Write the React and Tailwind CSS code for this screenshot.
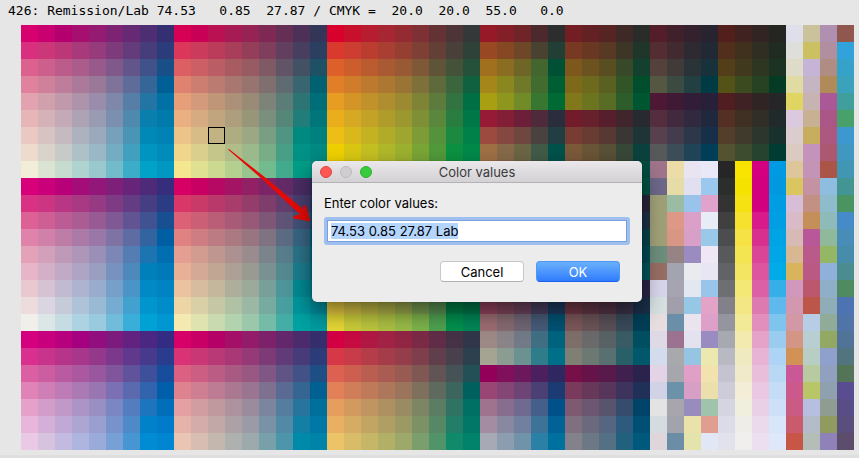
import { useEffect, useRef, useState } from 'react';

// Each block is a list of 25 rows; the blocks stand side by side on the chart.
const CYAN_MAGENTA = [
  'd6006f c80070 b4006e a60e70 941a72 7e2274 662a74 4e2e72 342f70',
  'd8307e cb3779 bb3777 a8397a 963b7b 7e3b7c 643c7c 463d7a 2c3c7a',
  'dd618f cc5f8c bb5c8a aa5c8a 985a8b 805889 625589 41528a 184f87',
  'e0829d cf809b be7d9a ab7a9a 997898 80739a 5f6b99 366698 005f97',
  'e3a2b0 d1a0ad c099aa ad94aa 998dab 8088aa 567ea6 2375a4 0070a5',
  'e6b5b8 d4b2b7 c3aab6 aea3b4 999bb2 7b8faf 4f89ad 097fae 0079ab',
  'e9c9c2 d7c3c1 c5babf adb3be 9aa9bb 77a0ba 4a94b6 0089b6 0083b4',
  'eddbcd dad3cc c6cbc8 adc1c6 99b7c4 74acc1 42a0bf 0095c0 008cba',
  'f2edd8 dbe4d3 c5dccf afd3cf 99c8cd 72bbca 3cadc8 00a2c8 0098c2',
  'd7007a c90079 b80078 a40c78 921779 7e1f79 662579 4e2a79 362d7c',
  'd93285 cb3582 b83785 a93982 963a83 7e3b84 643c84 463d83 2b3c84',
  'dd6195 cd5f94 bb5c94 aa5c93 985a93 805893 625493 415293 184f90',
  'e083ab d080a9 be7da7 ab7aa6 9977a6 7e73a3 5e6ca3 3364a0 005ea3',
  'e4a2b9 d2a0ba bf9ab8 ad96b8 9a8fb6 7c87b5 547eb3 1c75b0 006eb0',
  'e6b5c8 d4b0c6 c1aac5 aea5c4 9a9ec1 7892c0 4e89bb 0080ba 0079b8',
  'e9c8d0 d5c2d2 c2bad0 aeb3cf 9aaccd 76a0c9 4a94c7 0089c4 0083c3',
  'ecdcdc dad5e0 c6cbda aec2d8 9ab9d4 76acd1 42a1ce 0096cd 008cc8',
  'f0efe9 dbe7e6 c5dce2 add2e2 99cadd 72bcdb 38aed8 00a2d6 0096d1',
  'd5007e c8007d b6007e a4007f 920d7e 7c1a7e 62227f 4a2782 342c82',
  'd92f8e c8348c b6358b a8378b 94388b 7c388b 61398c 473a8d 2a3c8d',
  'db5fa3 cc5da1 ba5aa0 aa589f 98579e 80559c 60529b 3f509b 184d9b',
  'e083b6 d07fb6 bd7cb6 ab79b4 9975b2 7b70b3 5b69ae 3164ac 005eab',
  'e5a1ca d39dc9 c099c8 ad94c6 998fc3 7a87c2 537dbe 1c75bd 006eb8',
  'e8b6da d4b0d8 c0a9d5 ada5d2 9a9fd0 7893cc 4e8ac8 0081c8 007bc9',
  'eac9e4 d7c3e0 c3bbdf aeb5df 9aabda 76a0d6 4895d3 008bd2 0085d0',
];

const HALF_YELLOW = [
  'd60055 c80056 ba1153 a71b54 952454 7e2854 642e55 4c3057 343657',
  'da375a cb3b5b ba3c5a a93e5a 953e5a 7e3e5c 623f5e 483f60 2b4060',
  'dc6063 cb5f65 ba5d64 a95b62 985a63 7f5964 615466 425164 1e5066',
  'df826f cc7f70 bb7b70 aa7770 987470 7f706f 5f6a71 396570 006270',
  'e69f79 d39a7b c09679 ac9178 9a8b76 7e8379 5b7c77 2d7475 006e78',
  'ebb082 d6ab82 c1a57f ae9e7e 989679 7b8f7e 568677 217d7a 00767b',
  'ecc48a d8bc87 c2b382 aead82 9ca884 7a9e83 509482 00897e 00807f',
  'f0d68c dbcf8e c5c68a b1bd89 9cb98c 78ad88 489f86 009285 008982',
  'f5e78f e0e093 cbd991 b5cf90 9ac48f 72bb8f 43ab8d 009e88 009486',
  'd70064 c80063 b50964 a41465 922065 7b2567 622b67 4a2d65 333268',
  'd93768 c93a69 b8396a a83c6a 953d6a 7e3d6b 623d6e 483e70 2c3e70',
  'dc6076 cb5f76 ba5d76 a95a76 985976 7f5776 605476 435178 1e5078',
  'df8281 ce7e82 bc7b82 aa7982 987581 7f7281 5d6b82 386583 006283',
  'e49f92 d29c91 c09790 ac9190 9a8c8e 7b848b 577c8a 2a7388 006e88',
  'e8b097 d4aa97 c1a694 aea094 999a92 7a9192 53888f 1b7d8e 00768e',
  'ecc3a1 d8bc9f c4b79c aeae9c 9baa9b 789f99 4d9598 008a93 008293',
  'eed5a6 dad0a8 c6c8a5 b1c1a4 9bb8a4 78ab9f 47a09f 00959d 008d9c',
  'f4e9b1 dfe3b0 c9dab0 b3d3af 9bc8ab 74bba8 44ada5 00a2a2 009a9f',
  'd60068 c80066 b50068 a41068 921c69 7c226a 63286b 4c2b6d 362f6d',
  'd93376 c93775 b93876 a83976 953a76 7c3b77 613b78 473b79 2b3c79',
  'dc6082 cc5e83 ba5c83 a95a82 985882 805784 605485 425186 1d4f84',
  'df828f ce8092 bd7c93 ab7892 997592 7e7190 5b6a92 356591 006091',
  'e4a0a2 d19da0 c0999e ae929d 9a8c9c 7b869e 557d9e 27759c 006f9c',
  'e6b3aa d4aca9 c2a8a6 aea1a6 9a9ba6 7a92a5 5289a5 147fa4 0078a5',
  'eac5b3 d8bdb3 c4b8ae afb1ae 9caaac 78a0ab 4d95aa 008aaa 0083a9',
];

const FULL_YELLOW = [
  'd8002c c8102d b81c31 a72633 942b33 7e3034 643234 4c3437 343839',
  'd93a2d cb3e31 ba3d30 a93f32 953f33 7e4034 633f36 4a403a 2e4239',
  'dd5f29 cc5d2d bb5b30 aa5a32 985a35 7f5837 605438 45523a 255039',
  'e07f27 cf7d2b bd792d ac7831 9a7434 7f6f39 5f6a3c 3b653d 0f6140',
  'e69d22 d39626 c09229 ae8e2e 9b8a32 7f8336 5c7b3c 337341 006f44',
  'eaae1d d5a924 c3a226 af9c2b 9b9830 7e8f36 5a873c 2a7d41 007747',
  'edbf16 d8b81d c4b222 b0ac2a 9ea62f 7d9c37 55923c 1c8941 00814a',
  'efd100 d9c812 c5c021 b0b82a 9cb22f 7aa636 519a3b 0c9142 00894a',
  'f2e200 dcd810 c8cf20 b2c62a 9cbc30 78b038 4aa43e 009a44 009048',
  'd60036 c80d37 b7173a a6203c 93263c 7d2b3d 622f3e 493340 33373f',
  'd8393a ca3d3c b83d3d a73e3e 943f3f 7e3f40 623f41 494043 2d4143',
  'dd603c cc5e3f bb5c41 aa5b42 985a44 7f5846 615447 455248 245047',
  'e18040 d07e42 be7a43 ad7846 9b7448 7f704b 5f6a4d 3c654d 08604f',
  'e69e40 d39843 c19445 ae9048 9b8b4a 7e844c 5b7c4f 317452 006f54',
  'eaaf40 d6aa44 c3a444 b09e47 9b994a 7d914d 598850 267e53 007757',
  'edc13e d8ba42 c5b445 b1ae48 9ea84c 7c9e51 549352 168a56 00825a',
  'f0d040 d8c545 c5bc45 b4b449 9dab4d 7ba053 5b9556 008248 00794c',
  'e6d836 cacc3a bcc63d adc042 99bc47 7db34b 4ea250 00904e 008657',
  'd30043 c60a42 b01844 a22245 902544 7b2a46 602c48 463247 32364a',
  'd63848 c83b48 b53c49 a43c49 933e4a 7e3e4b 613e4b 48404c 2c404d',
  'dc6150 cc5f50 bb5e52 aa5c53 985b54 7f5854 625455 455256 225056',
  'e28158 d07e5a be7a59 ad775b 9b745c 7f705d 5f6a5f 3c655d 00605e',
  'e69e5e d39a60 c19561 ae9161 9a8c62 7d8562 5a7d63 2f7463 006f64',
  'e9b063 d6ab64 c2a562 b09f63 9b9964 7c9265 578865 227e66 007767',
  'ecc366 d8bc67 c5b668 b2b067 9da96a 7b9f6c 529469 108a6b 00826b',
];

const BLACK_40 = [
  '961928 831f26 6f2528 4c292c 2c2e2e',
  '984822 854823 6e4728 4a4230 213f34',
  'a0701f 8a6c22 6f6527 43652e 005035',
  'a4861b 8a8721 70792a 426b30 005e35',
  'a89f12 8e961e 718b28 387731 006a35',
  '961935 821f37 6b1f39 4e2a3b 2a2e3c',
  '9c4a40 854840 6f473f 4a4241 213f42',
  'a07045 876a49 6c6645 425b48 00524b',
  'a68b4e 8b8450 6f7a50 3f6b50 006053',
  'a9a452 8e9b54 6f8f54 367a54 006d54',
  '950d44 811745 6d1d47 4d2549 2d2b4a',
  '994852 844750 6f4650 4b4251 1e3f52',
  '9e6f5c 876b5e 6f665d 455b60 005260',
  'a48a6a 8b846c 707a6c 406d6c 00616c',
  'a8a473 8c9c74 6e9074 347b72 006e72',
  '94064e 800f4f 6c194f 4c2153 2e2954',
  '984660 84465e 704560 4b4161 1b3e62',
  '9c6d73 876a72 706674 465b78 005373',
  '9c8985 8a8488 717a86 406f84 00637e',
  'a5a493 8b9d92 6b9190 2f7c8b 007089',
  '93005a 80105b 6c185c 4c1f5e 2f2760',
  '9a4674 844675 6e4474 4b4073 1c3b72',
  '9f738e 876d8e 706990 455f8c 005189',
  'a48da3 8888a0 70809e 3d7399 006296',
  'a7aab5 8d9db0 7093aa 2b80a5 00709f',
];

const BLACK_60 = [
  '721e22 642124 572424 3f2927 2a2c2a',
  '773922 683822 583a24 3d3526 20362a',
  '7d581d 6b521f 594e22 374928 144030',
  '7e691a 6d6a1e 596021 325527 004e2c',
  '80781a 6c7420 596c26 2d5d2a 005630',
  '721b2b 66212c 571f2e 40252c 282a32',
  '773c32 683b33 573832 3a3634 1f3437',
  '7b5a39 6b5538 585137 384838 0c423d',
  '7e6c40 6b6740 586040 325540 004e41',
  '807b44 6c7544 586d44 2b5f44 005544',
  '741538 641a39 571f3a 40243c 29263c',
  '783a44 683844 573744 3c3546 1d3246',
  '7d594c 6b564c 58514c 38484e 06444e',
  '7f6d58 6b6858 586158 325758 004b55',
  '807d60 6c7760 576e60 296060 00575d',
  '751340 65163f 571c42 402244 2a2546',
  '743a48 653848 553648 3c344a 1a2f4a',
  '7c5759 6b5458 595058 3a4a5a 003f55',
  '7e6e6a 6b6a6b 586265 385b64 004f61',
  '7f7f74 6c7972 587070 296068 00586a',
  '771048 66134a 581a4a 40204e 2c224e',
  '7a3a5b 68385b 58355b 3e335c 203058',
  '7e5a70 6b5870 59546e 374c6c 00446a',
  '80707f 6a6a7c 566580 2d5a7d 005075',
  '83828a 6c7984 556f84 22617e 00587d',
];

const BLACK_80 = [
  '531e2a 40202b 33212e 27232f 521f1d 402220 312422 252622',
  '542d32 422b30 2e2a32 212a34 522f1c 40301e 302e22 202b22',
  '55413b 403b38 2a3438 17323a 523f19 40391e 2e3622 1c3222',
  '565743 3b4b41 224041 003b44 535217 3b4a1f 264222 053b25',
  '4d1834 3e1a34 321d38 272038 501e21 3f2223 302425 262528',
  '542d3f 422a3e 31293d 20283e 532f24 403024 302e26 212a2a',
  '56414c 423c4c 2c3749 182f49 523e2a 3f3a2c 2c362d 19312d',
  '575859 3d4d58 204456 003e57 535231 3d4b2f 26432f 003c32',
  'a0758c ecdca8 e8e4f1 e8e8f8 262626 f8e400 d50080 009ae3',
  '6d6888 e5dca8 e2e0f0 9bc8ed 2c2e2c f6e200 d2007e 0099e0',
  'a0a078 9bbca4 99c3ea e0a3cb 333333 f6e213 d2007e 009de2',
  'a0a078 de9888 dc9fc8 e8ecf6 404041 f6e12e d81a8a 009fe4',
  'a0a078 d79784 d9a0c7 99c8e8 4c4d4f f6e245 d8308f 00a3e4',
  '6e8e7c 968484 9a8cc0 efe8f4 58595b f3e452 db4597 00a6e6',
  '986e64 a2a5af eaebef e8e6f3 626366 f3e562 dc559e 00abe8',
  'd8d6ec a6a4b0 e3e8f0 9ac5ea 6e6f72 f3e775 dc60a6 35afe8',
  'd6e0e0 a09fab 96c8e6 e3a3c7 828189 f3e684 dd7ab0 60b9ec',
  'e8dee0 6b8ea9 e9e4ee dda0c9 94959e f3ea98 e28fbd 7fc4ed',
  'ded9e4 9b7290 e4e2ee 998cc0 a6a9b0 f3eab0 e5a3ca 9accf0',
  'd3dced a8a9ac 96c4e3 ebe9b0 b9b9c4 f0eac0 e8b4d6 add4f4',
  'e2d4e6 a5a7ad e09fc6 f2e2ad c4c3cf f0eaca e9bedb b8d8f4',
  'd2d2e6 6c92aa d79fc5 ebe0ac cdccd8 f3ecd6 eac7e2 c4dcf6',
  'e3e3e3 a8a6ac 988cbd 9fc4ab d5d4e1 f0eedd ead0e6 cde0f8',
  'd4dcdf a3a3ad e9e3ab e09e90 dcdce8 eeede8 eadaec d8e6fa',
  'e1d5dc 6b8ea6 e5e3ac e1e7f5 e2e2ed f0efee ecdfef dfe8fa',
];

const LIGHT_TINTS = [
  'dedfeb c9c29a b090b0 90574f',
  'dedfdb cbc062 b0909f 32a2da',
  'dedcc8 c5b4d5 b08d83 36a1c9',
  'dfdba3 c5b4c2 b08a59 3aa2ba',
  'e0d562 c8b3b3 ab5897 409f9d',
  'dac9df c8b093 aa5788 48a06a',
  'dbccd0 c6ae5e ac5880 3d98cf',
  'dbcabf c393bb ac5870 4097bf',
  'dcc69a c394b6 aa5548 4197b3',
  'dac560 c492a3 8fbde0 439594',
  'd7bdd5 c39184 8fbccd 4a9462',
  'd9bac7 c48f58 8fbaba 458bc8',
  'd7bab3 b95898 8fb99a 478db8',
  'd8b793 ba5a8b 93b765 488cab',
  'd9b45e ba5984 8fb0d8 4a8c90',
  'd098bd bb586d 8fafc9 4f8a60',
  'd298b0 bb5648 8fadb7 4d73b2',
  'd298a3 b7cde6 90ac98 5074a8',
  'd39684 b8ced2 93a862 527398',
  'd29256 b8cdc4 8fa0cd 51747f',
  'cb5896 b8caa0 90a0be 537457',
  'cb598c b8c667 8fa0ae 594c90',
  'ca5b82 b6bfdf 8f9c90 594d85',
  'c95b6d b5bcc9 909c5f 5a4e7d',
  'c85646 b4bdb8 8f82b8 5c4d6c',
];

const BLOCKS = [CYAN_MAGENTA, HALF_YELLOW, FULL_YELLOW, BLACK_40, BLACK_60, BLACK_80, LIGHT_TINTS];
const ROWS = CYAN_MAGENTA.map((_, r) => BLOCKS.flatMap((block) => block[r].split(' ')));
const SELECTED = { row: 6, col: 11 };

function Chart() {
  return (
    <div className="grid grid-cols-49 auto-rows-[17px] pl-[21px] pr-[5px]">
      {ROWS.map((row, r) =>
        row.map((hex, c) => (
          <div
            key={`${r}-${c}`}
            className={r === SELECTED.row && c === SELECTED.col ? 'border border-black' : ''}
            style={{ backgroundColor: `#${hex}` }}
          />
        ))
      )}
    </div>
  );
}

function Arrow() {
  return (
    <svg className="absolute left-[226px] top-[147px] w-[86px] h-[76px]" viewBox="0 0 86 76" aria-hidden="true">
      <path
        d="M2 2.4L3 2L38 29.5L77.5 62.5L76.5 59.5Q77 58 80 59L84.5 74.5L68 71.5Q66 69.5 69 68.6L74 67.5L36 32Z"
        fill="#e60a05"
      />
    </svg>
  );
}

function ColorDialog() {
  const inputRef = useRef(null);
  const [value, setValue] = useState('74.53 0.85 27.87 Lab');

  useEffect(() => {
    inputRef.current.focus();
    inputRef.current.select();
  }, []);

  return (
    <div
      role="dialog"
      aria-labelledby="dialog-title"
      className="absolute left-[312px] top-[161px] w-[330px] rounded-[5px] bg-[#ececec] font-['Inter','Liberation_Sans',sans-serif] text-[13px] shadow-[0_10px_22px_rgba(0,0,0,0.5),0_0_1px_rgba(0,0,0,0.5)]"
    >
      {/* Title bar */}
      <div className="flex h-[22px] items-center rounded-t-[5px] border-b border-[#b4b2b4] bg-linear-to-b from-[#eae8ea] to-[#d3d1d3] px-2">
        <div className="flex w-[52px] gap-2">
          <button type="button" aria-label="Close" className="size-3 rounded-full border border-[#e2433f] bg-[#fc5753]" />
          <button type="button" aria-label="Minimize" className="size-3 rounded-full border border-[#bdbbbd] bg-[#d0ced0]" />
          <button type="button" aria-label="Zoom" className="size-3 rounded-full border border-[#2eae34] bg-[#36cc3c]" />
        </div>
        <h1 id="dialog-title" className="flex-1 pt-px text-center leading-5 text-[#3c3a3c]">Color values</h1>
        <div className="w-[52px]" />
      </div>

      <form className="px-3 pt-3 pb-5" onSubmit={(e) => e.preventDefault()}>
        <label htmlFor="color-values" className="block leading-4 text-black">Enter color values:</label>
        <div className="mt-[6px] rounded-[3px] bg-[#9fc0ef] p-[3px]">
          <input
            ref={inputRef}
            id="color-values"
            type="text"
            value={value}
            onChange={(e) => setValue(e.target.value)}
            className="block h-[22px] w-full border border-[#76a0e0] bg-white px-[3px] leading-4 text-black outline-none selection:bg-[#b3d5fe] selection:text-black"
          />
        </div>
        <div className="mt-4 flex justify-end gap-3 pr-[10px]">
          <button type="button" className="h-[21px] w-[84px] rounded-[4px] border border-[#c8c8c8] border-b-[#b0b0b0] bg-white leading-4 text-black">
            Cancel
          </button>
          <button type="submit" className="h-[21px] w-[84px] rounded-[4px] border border-[#4a9af5] border-b-[#1f5ff0] bg-linear-to-b from-[#6cb0fa] to-[#2f7bfd] leading-4 text-white">
            OK
          </button>
        </div>
      </form>
    </div>
  );
}

export default function App() {
  return (
    <main className="relative flex min-h-screen flex-col bg-[#e6e6e6]">
      <p className="h-[25px] whitespace-pre pl-2 font-['DejaVu_Sans_Mono','Liberation_Mono',monospace] text-[13px] leading-[22px] text-black">
        {'426: Remission/Lab 74.53   0.85  27.87 / CMYK =  20.0  20.0  55.0   0.0'}
      </p>
      <Chart />
      <div className="mt-auto h-[3px] bg-[#dfdfdf]" />
      <Arrow />
      <ColorDialog />
    </main>
  );
}
